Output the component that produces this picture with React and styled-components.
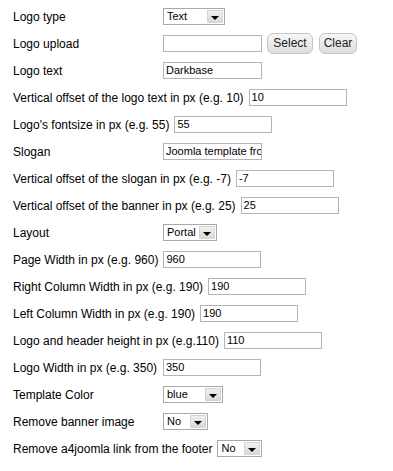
import React from 'react'
import styled, { createGlobalStyle } from 'styled-components'

const GlobalStyle = createGlobalStyle`
    body {
        margin: 0;
        background: #ffffff;
        font-family: 'Liberation Sans', Arial, sans-serif;
        color: #000000;
    }
`

const Form = styled.div`
    padding: 3px 0 0 13px;
    display: flex;
    flex-direction: column;
`

const Row = styled.div`
    height: 27px;
    display: flex;
    align-items: center;
`

const Label = styled.span`
    min-width: 150px;
    padding-right: 5px;
    font-size: 12px;
    white-space: nowrap;
    box-sizing: border-box;
`

const TextInput = styled.div`
    width: ${p => p.$w || 99}px;
    height: 17px;
    box-sizing: border-box;
    border: 1px solid #b5b5b5;
    background: #fff;
    font-size: 11px;
    line-height: 15px;
    padding-left: 2px;
    overflow: hidden;
    white-space: nowrap;
`

const SelectBox = styled.div`
    width: ${p => p.$w}px;
    height: 17px;
    box-sizing: border-box;
    border: 1px solid #a9a9a9;
    background: #fff;
    display: flex;
    font-size: 11px;
`

const SelectText = styled.span`
    flex: 1;
    padding-left: 3px;
    line-height: 15px;
`

const Arrow = styled.span`
    width: 16px;
    margin: 1px;
    box-sizing: border-box;
    border: 1px solid #d4d4d4;
    background: linear-gradient(#efefef, #d9d9d9);
    display: flex;
    align-items: center;
    justify-content: center;
    &::after {
        content: '';
        margin-top: 2px;
        border-left: 4px solid transparent;
        border-right: 4px solid transparent;
        border-top: 4px solid #000;
    }
`

const Button = styled.span`
    margin-left: ${p => p.$ml || 5}px;
    width: ${p => p.$w}px;
    height: 21px;
    box-sizing: border-box;
    border: 1px solid #c4c4c4;
    border-radius: 6px;
    background: linear-gradient(#f7f7f7, #dddddd);
    font-size: 12px;
    line-height: 19px;
    text-align: center;
    color: #222;
`

const Select = ({ value, w }) => (
    <SelectBox $w={w}>
        <SelectText>{value}</SelectText>
        <Arrow />
    </SelectBox>
)

const App = () => {
    return (
        <>
            <GlobalStyle />
            <Form>
                <Row>
                    <Label>Logo type</Label>
                    <Select value="Text" w={62} />
                </Row>
                <Row>
                    <Label>Logo upload</Label>
                    <TextInput />
                    <Button $ml={5} $w={46}>Select</Button>
                    <Button $ml={6} $w={38}>Clear</Button>
                </Row>
                <Row>
                    <Label>Logo text</Label>
                    <TextInput>Darkbase</TextInput>
                </Row>
                <Row>
                    <Label>Vertical offset of the logo text in px (e.g. 10)</Label>
                    <TextInput $w={98}>10</TextInput>
                </Row>
                <Row>
                    <Label>Logo's fontsize in px (e.g. 55)</Label>
                    <TextInput $w={98}>55</TextInput>
                </Row>
                <Row>
                    <Label>Slogan</Label>
                    <TextInput>Joomla template from a4joomla</TextInput>
                </Row>
                <Row>
                    <Label>Vertical offset of the slogan in px (e.g. -7)</Label>
                    <TextInput $w={98}>-7</TextInput>
                </Row>
                <Row>
                    <Label>Vertical offset of the banner in px (e.g. 25)</Label>
                    <TextInput $w={98}>25</TextInput>
                </Row>
                <Row>
                    <Label>Layout</Label>
                    <Select value="Portal" w={54} />
                </Row>
                <Row>
                    <Label>Page Width in px (e.g. 960)</Label>
                    <TextInput $w={98}>960</TextInput>
                </Row>
                <Row>
                    <Label>Right Column Width in px (e.g. 190)</Label>
                    <TextInput $w={98}>190</TextInput>
                </Row>
                <Row>
                    <Label>Left Column Width in px (e.g. 190)</Label>
                    <TextInput $w={98}>190</TextInput>
                </Row>
                <Row>
                    <Label>Logo and header height in px (e.g.110)</Label>
                    <TextInput $w={98}>110</TextInput>
                </Row>
                <Row>
                    <Label>Logo Width in px (e.g. 350)</Label>
                    <TextInput $w={98}>350</TextInput>
                </Row>
                <Row>
                    <Label>Template Color</Label>
                    <Select value="blue" w={60} />
                </Row>
                <Row>
                    <Label>Remove banner image</Label>
                    <Select value="No" w={45} />
                </Row>
                <Row>
                    <Label>Remove a4joomla link from the footer</Label>
                    <Select value="No" w={45} />
                </Row>
            </Form>
        </>
    )
}

export default App
